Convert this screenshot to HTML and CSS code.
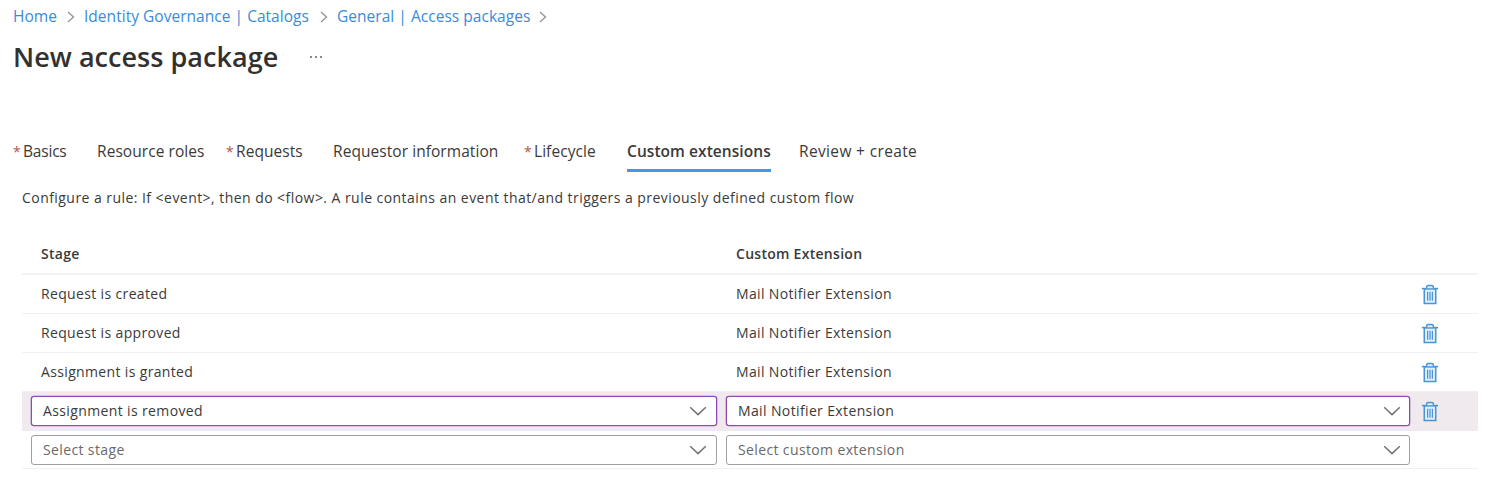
FILE: index.html
```html
<!DOCTYPE html>
<html lang="en">
<head>
<meta charset="utf-8">
<title>New access package</title>
<link rel="stylesheet" href="styles.css">
</head>
<body>
<svg width="0" height="0" class="defs">
  <symbol id="trash" viewBox="0 0 18 22"><path d="M3 5h12v15.500H3z" fill="#dff0fb" stroke="#4a94d6" stroke-width="1.6"/><path d="M.5 4.800h17" stroke="#4a94d6" stroke-width="1.600"/><path d="M5.500 4.500V2.800Q5.500 1.500 7 1.500h4q1.500 0 1.500 1.300v1.700" fill="#dff0fb" stroke="#4a94d6" stroke-width="1.500"/><path d="M6.500 8v9.500M9 8v9.500M11.500 8v9.500" stroke="#4a94d6" stroke-width="1.300"/></symbol>
  <symbol id="down" viewBox="0 0 18 10"><path d="M1.200 1.200 9 8.600l7.800-7.400" fill="none" stroke="#747474" stroke-width="1.500"/></symbol>
  <symbol id="next" viewBox="0 0 8 12"><path d="M1 1l5.500 5L1 11" fill="none" stroke="#949494" stroke-width="1.300"/></symbol>
</svg>
<nav class="crumbs">
  <a class="home">Home</a><svg class="next"><use href="#next"/></svg>
  <a class="gov">Identity Governance | Catalogs</a><svg class="next"><use href="#next"/></svg>
  <a class="pkgs">General | Access packages</a><svg class="next"><use href="#next"/></svg>
</nav>
<header class="title"><h1>New access package</h1><span class="more"><i></i><i></i><i></i></span></header>
<div class="tabs">
  <div class="tab basics"><b>*</b><span>Basics</span></div>
  <div class="tab roles"><span>Resource roles</span></div>
  <div class="tab requests"><b>*</b><span>Requests</span></div>
  <div class="tab info"><span>Requestor information</span></div>
  <div class="tab life"><b>*</b><span>Lifecycle</span></div>
  <div class="tab active"><span>Custom extensions</span></div>
  <div class="tab review"><span>Review + create</span></div>
</div>
<p class="hint"><span>Configure a rule: If &lt;event&gt;, then do &lt;flow&gt;. A rule contains an event that/and triggers a previously defined custom flow</span></p>
<main class="table">
  <div class="row head"><div><span>Stage</span></div><div><span>Custom Extension</span></div></div>
  <div class="row"><div><span>Request is created</span></div><div><span>Mail Notifier Extension</span></div><svg class="trash"><use href="#trash"/></svg></div>
  <div class="row"><div><span>Request is approved</span></div><div><span>Mail Notifier Extension</span></div><svg class="trash"><use href="#trash"/></svg></div>
  <div class="row"><div><span>Assignment is granted</span></div><div><span>Mail Notifier Extension</span></div><svg class="trash"><use href="#trash"/></svg></div>
  <div class="row edit current"><div class="select"><span>Assignment is removed</span><svg class="down"><use href="#down"/></svg></div><div class="select"><span>Mail Notifier Extension</span><svg class="down"><use href="#down"/></svg></div><svg class="trash"><use href="#trash"/></svg></div>
  <div class="row edit empty"><div class="select"><span>Select stage</span><svg class="down"><use href="#down"/></svg></div><div class="select"><span>Select custom extension</span><svg class="down"><use href="#down"/></svg></div></div>
</main>
</body>
</html>
```
FILE: styles.css
```css
* { box-sizing: border-box; }
body { margin: 0; background: #fff; color: #3b3a39; font-family: "Open Sans", "Noto Sans", sans-serif; height: 486px; overflow: hidden; white-space: nowrap; }
.defs { display: block; height: 0; }
.crumbs { display: flex; align-items: center; height: 32px; padding-left: 13px; font-size: 15.5px; letter-spacing: .03px; color: #3b8bd8; }
.crumbs a { flex: none; }
.home { width: 54px; }
.gov { width: 236px; }
.pkgs { width: 202px; }
.next { width: 8px; height: 12px; flex: none; margin-right: 9px; margin-top: 2px; }
.title { display: flex; align-items: center; height: 50px; padding-left: 13px; }
.title h1 { margin: 0; width: 297px; font-size: 27px; font-weight: 600; line-height: 50px; letter-spacing: .04px; color: #323130; }
.more { display: flex; gap: 3px; }
.more i { width: 2px; height: 2px; background: #8a8a8a; }
.tabs { display: flex; height: 44px; margin-top: 48px; margin-left: 13px; font-size: 15.5px; letter-spacing: .06px; }
.tab { flex: none; height: 42px; line-height: 43px; }
.tab b { display: inline-block; width: 10px; color: #b0554f; font-weight: 400; font-size: 14px; }
.basics { width: 84px; letter-spacing: -.2px; }
.roles { width: 129px; }
.requests { width: 107px; }
.info { width: 191px; }
.life { width: 103px; }
.active { width: 144px; margin-right: 28px; border-bottom: 3px solid #4a98dc; font-weight: 600; }
.review { letter-spacing: .35px; }
.hint { margin: 14px 0 0 22px; font-size: 14px; line-height: 20px; letter-spacing: .45px; }
.table { margin: 26px 0 0 22px; width: 1456px; font-size: 14px; line-height: 20px; letter-spacing: .35px; }
.row { display: grid; grid-template-columns: 695px 684px 1fr; height: 39px; align-items: center; padding-left: 19px; border-bottom: 1px solid #f0f0f0; }
.row:not(.head) > div:not(.select) { padding-bottom: 1px; }
.head { height: 41px; font-weight: 600; letter-spacing: .28px; border-bottom: 2px solid #f3f3f3; padding-top: 1px; }
.trash { width: 18px; height: 21px; margin-left: 1px; }
.edit { grid-template-columns: 686px 684px 1fr; column-gap: 9px; padding-left: 9px; }
.edit .trash { margin-left: 2px; }
.select { display: flex; align-items: center; justify-content: space-between; height: 30px; padding: 0 9px 0 11px; border: 1px solid #a0a0a0; border-radius: 3px; background: #fff; letter-spacing: .37px; }
.select + .select { padding-right: 8px; }
.current { background: #f0eaef; border-bottom-color: #f0eaef; }
.current .select { border-color: #8f4bb3; box-shadow: 0 0 0 .3px #8f4bb3; }
.current .select span { padding-bottom: 1px; }
.empty { height: 38px; }
.empty .select { color: #6a6a6a; }
.down { width: 18px; height: 10px; }
```
